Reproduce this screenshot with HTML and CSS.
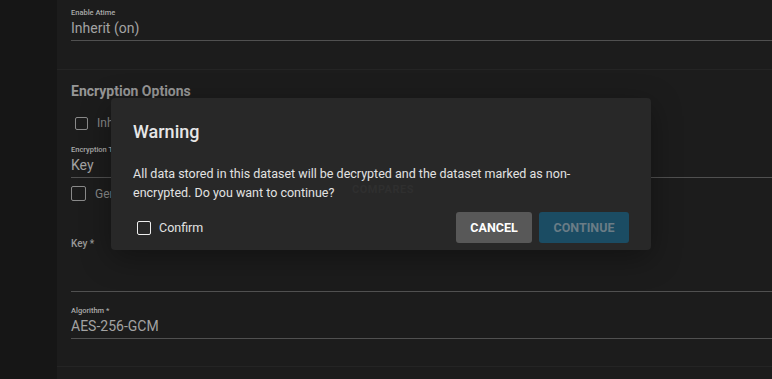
FILE: index.html
```html
<!DOCTYPE html>
<html lang="en">
<head>
    <meta charset="UTF-8">
    <title>Dataset - Encryption</title>
    <link rel="stylesheet" href="styles.css">
</head>
<body>
    <div class="layout">
        <aside class="sidebar"></aside>
        <main class="main">
            <section class="section section-general">
                <div class="field">
                    <span class="field-label">Enable Atime</span>
                    <div class="field-value">Inherit (on)</div>
                </div>
            </section>
            <section class="section section-enc">
                <h3 class="section-title">Encryption Options</h3>
                <label class="check check-inherit"><span class="box"></span>Inherit</label>
                <div class="field field-enc">
                    <span class="field-label">Encryption Type</span>
                    <div class="field-value">Key</div>
                </div>
                <label class="check check-gen"><span class="box"></span>Generate Key</label>
                <div class="field field-key">
                    <span class="key-label">Key *</span>
                    <div class="field-value"></div>
                </div>
                <div class="field field-algo">
                    <span class="field-label">Algorithm *</span>
                    <div class="field-value">AES-256-GCM</div>
                </div>
            </section>
            <section class="section section-last"></section>
        </main>
    </div>

    <div class="dialog">
        <h2 class="dialog-title">Warning</h2>
        <p class="dialog-text">All data stored in this dataset will be decrypted and the dataset marked as non-encrypted. Do you want to continue?</p>
        <div class="dialog-actions">
            <label class="confirm"><span class="confirm-box"></span>Confirm</label>
            <button class="btn btn-cancel">CANCEL</button>
            <button class="btn btn-continue" disabled>CONTINUE</button>
        </div>
    </div>

    <!-- faint text bleeding through from the page behind -->
    <div class="ghost">COMPARES</div>
</body>
</html>
```

FILE: styles.css
```css
body {
    margin: 0;
    padding: 0;
    font-family: Roboto, 'Liberation Sans', sans-serif;
    background-color: #161616;
    color: #aaa;
    height: 379px;
    overflow: hidden;
}
.layout {
    display: flex;
    height: 379px;
}
.sidebar {
    width: 57px;
    background-color: #161616;
}
.main {
    flex: 1;
    background-color: #1c1c1c;
}
.section {
    padding-left: 14px;
    box-sizing: border-box;
}
.field-label {
    display: block;
    font-size: 7.5px;
    font-weight: 500;
    color: #aaa;
    height: 9px;
    line-height: 9px;
}
.field-value {
    font-size: 14px;
    color: #a3a3a3;
    height: 23px;
    line-height: 23px;
    border-bottom: 1px solid #505050;
}
.section-general {
    height: 70px;
    padding-top: 8px;
    border-bottom: 1px solid #242424;
}
.section-enc {
    padding-top: 12px;
    height: 297px;
    border-bottom: 1px solid #242424;
}
.section-title {
    margin: 0;
    font-size: 14px;
    font-weight: 700;
    color: #979797;
    line-height: 18px;
}
.check {
    display: flex;
    align-items: center;
    gap: 9px;
    font-size: 12px;
    color: #888;
}
.box {
    width: 13px;
    height: 13px;
    border: 1px solid #8a8a8a;
    border-radius: 2px;
    box-sizing: border-box;
}
.check-inherit {
    margin-top: 16px;
    margin-left: 4px;
    height: 14px;
}
.check-gen {
    margin-top: 8px;
    height: 15px;
}
.check-gen .box {
    width: 15px;
    height: 15px;
}
.field-enc {
    margin-top: 15px;
}
.field-key {
    margin-top: 37px;
}
.key-label {
    display: block;
    font-size: 10px;
    font-weight: 500;
    color: #999;
    height: 12px;
    line-height: 12px;
}
.field-key .field-value {
    height: 41px;
}
.field-algo {
    margin-top: 14px;
}
.dialog {
    position: absolute;
    left: 111px;
    top: 98px;
    width: 540px;
    height: 152px;
    box-sizing: border-box;
    padding: 22px 22px 0 22px;
    background-color: #282828;
    border-radius: 4px;
    box-shadow: 0 8px 30px rgba(0, 0, 0, 0.35);
}
.dialog-title {
    margin: 0;
    font-size: 18px;
    font-weight: 500;
    color: #e6e6e6;
    line-height: 24px;
}
.dialog-text {
    margin: 20px 0 0 0;
    font-size: 12.5px;
    line-height: 19px;
    color: #e2e2e2;
    width: 450px;
}
.dialog-actions {
    display: flex;
    align-items: center;
    margin-top: 10px;
}
.confirm {
    display: flex;
    align-items: center;
    gap: 8px;
    font-size: 12.5px;
    color: #e2e2e2;
    margin-left: 4px;
    flex: 1;
}
.confirm-box {
    width: 14px;
    height: 14px;
    border: 1.5px solid #eee;
    border-radius: 2px;
    box-sizing: border-box;
}
.btn {
    height: 31px;
    border: none;
    border-radius: 3px;
    font-family: Roboto, 'Liberation Sans', sans-serif;
    font-size: 12.5px;
    font-weight: 700;
    padding: 0;
}
.btn-cancel {
    width: 76px;
    background-color: #585858;
    color: #fff;
}
.btn-continue {
    width: 90px;
    margin-left: 7px;
    background-color: #1b4c63;
    color: #6a7c86;
}
.ghost {
    position: absolute;
    left: 352px;
    top: 185px;
    font-size: 11px;
    line-height: 9px;
    font-weight: 700;
    color: #2f2f2f;
    letter-spacing: 0.5px;
}
```
